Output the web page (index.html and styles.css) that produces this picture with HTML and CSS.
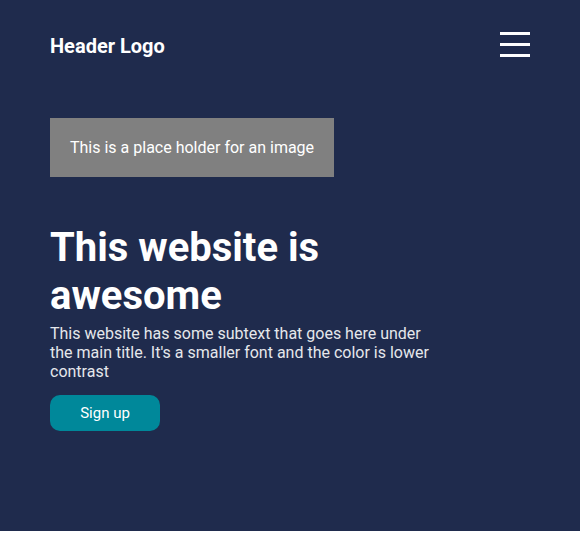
FILE: index.html
```html
<!DOCTYPE html>
<html lang="en">
<head>
<meta charset="utf-8">
<title>Header Logo</title>
<link rel="stylesheet" href="styles.css">
</head>
<body>
<div class="page">
  <header class="header">
    <div class="logo">Header Logo</div>
    <button class="menu" aria-label="Menu">
      <span class="bar"></span>
      <span class="bar"></span>
      <span class="bar"></span>
    </button>
  </header>
  <main class="hero">
    <div class="placeholder">This is a place holder for an image</div>
    <h1 class="title">This website is awesome</h1>
    <p class="subtext">This website has some subtext that goes here under the main title. It's a smaller font and the color is lower contrast</p>
    <a class="signup" href="#">Sign up</a>
  </main>
</div>
</body>
</html>
```
FILE: styles.css
```css
html, body {
  margin: 0;
  padding: 0;
  background: #ffffff;
}
body {
  font-family: Roboto, "Liberation Sans", sans-serif;
}
.page {
  background: #1f2b4d;
  height: 531px;
  padding: 0 50px;
  box-sizing: border-box;
}
.header {
  display: flex;
  justify-content: space-between;
  align-items: center;
  height: 89px;
}
.logo {
  color: #ffffff;
  font-weight: 700;
  font-size: 20px;
  margin-top: 2px;
}
.menu {
  background: none;
  border: 0;
  padding: 0;
  width: 30px;
  display: flex;
  flex-direction: column;
  gap: 8px;
  cursor: pointer;
}
.bar {
  display: block;
  width: 30px;
  height: 3px;
  background: #ffffff;
}
.hero {
  width: 390px;
  padding-top: 29px;
}
.placeholder {
  display: inline-block;
  background: #808080;
  color: #ffffff;
  font-size: 16px;
  padding: 20px;
}
.title {
  color: #ffffff;
  font-size: 40px;
  font-weight: 700;
  line-height: 48px;
  margin: 47px 0 0;
}
.subtext {
  color: #e5e7eb;
  font-size: 16px;
  margin: 4px 0 14px;
}
.signup {
  display: inline-block;
  width: 110px;
  text-align: center;
  background: #00889a;
  color: #ffffff;
  text-decoration: none;
  font-size: 15px;
  line-height: 20px;
  padding: 8px 0;
  border-radius: 10px;
}
```
